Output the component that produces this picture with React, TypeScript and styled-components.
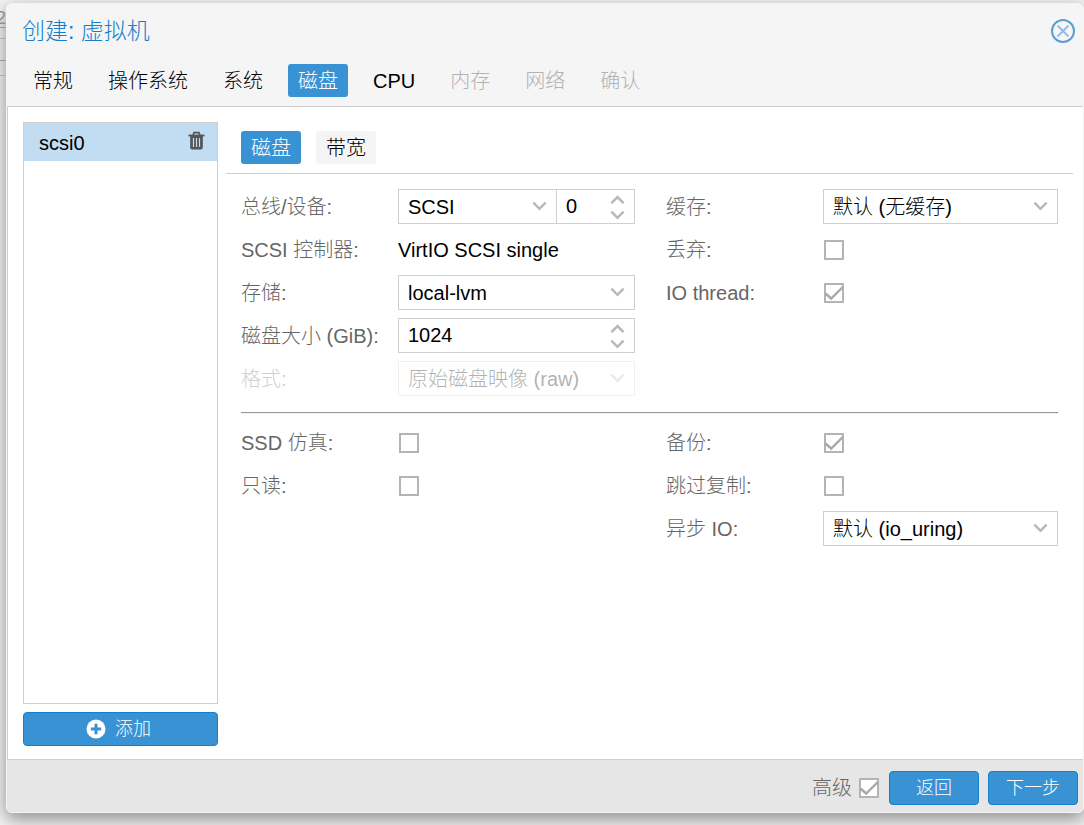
import React, { useState } from "react";
import styled, { createGlobalStyle, css } from "styled-components";

const GlobalStyle = createGlobalStyle`
  * { box-sizing: border-box; }
  html, body, #root { height: 100%; }
  body {
    margin: 0;
    background: #f6f6f6;
    color: #000;
    font-family: "Liberation Sans", "Noto Sans CJK SC", sans-serif;
    font-weight: 300;
    font-size: 20px;
    line-height: 24px;
  }
  button, input, select { font: inherit; color: inherit; margin: 0; }
`;

const Backdrop = styled.div`
  position: relative;
  min-height: 100%;
  display: flex;
  padding: 3px 0 12px 6px;
  overflow: hidden;
`;

const PageBehind = styled.div`
  position: absolute;
  inset: 0 auto auto 0;
  width: 6px;
  overflow: hidden;
  color: #8c8c8c;
  font-size: 18px;
  line-height: 18px;
`;

const BehindLine = styled.div<{ $height: number; $dark?: boolean }>`
  height: ${(p) => p.$height}px;
  display: flex;
  align-items: flex-end;
  justify-content: flex-end;
  border-bottom: 1px solid ${(p) => (p.$dark ? "#999" : "#c4c4c4")};
`;

const Dialog = styled.main`
  position: relative;
  flex: 1;
  min-width: 0;
  display: flex;
  flex-direction: column;
  background: #f5f5f5;
  border: 1px solid #f5f5f5;
  border-radius: 6px;
  box-shadow: 0 6px 18px 1px #919191;
`;

const Header = styled.header`
  display: flex;
  align-items: center;
  justify-content: space-between;
  padding: 12px 7px 0 15px;
`;

const Title = styled.h1`
  margin: 0;
  font-size: 23px;
  line-height: 30px;
  font-weight: 300;
  color: #157fcc;
`;

const CloseButton = styled.button`
  display: flex;
  padding: 0;
  border: 0;
  background: none;
`;

const TabBar = styled.nav<{ $inner?: boolean }>`
  display: flex;
  gap: 15px;
  ${(p) =>
    p.$inner
      ? css`
          padding: 9px 15px;
          border-bottom: 1px solid #cfcfcf;
        `
      : css`
          padding: 18px 16px 9px;
        `}
`;

const Tab = styled.button<{ $active?: boolean; $shaded?: boolean }>`
  height: 33px;
  padding: 1px 10px 0;
  border: 0;
  border-radius: 3px;
  white-space: nowrap;
  background: ${(p) => (p.$active ? "#3892d4" : p.$shaded ? "#f5f5f5" : "transparent")};
  color: ${(p) => (p.$active ? "#fff" : "#000")};
  &:disabled { color: #b2b2b2; }
`;

const Body = styled.section`
  flex: 1;
  display: flex;
  gap: 8px;
  padding: 15px 10px 13px 15px;
  background: #fff;
  border: 1px solid #cfcfcf;
  border-right: 0;
`;

const Sidebar = styled.aside`
  width: 195px;
  display: flex;
  flex-direction: column;
  gap: 8px;
`;

const DiskList = styled.ul`
  flex: 1;
  margin: 0;
  padding: 0;
  list-style: none;
  border: 1px solid #cfcfcf;
`;

const DiskItem = styled.li`
  height: 38px;
  display: flex;
  align-items: center;
  justify-content: space-between;
  padding: 1px 12px 0 15px;
  background: #c2ddf2;
`;

const IconButton = styled.button`
  display: flex;
  padding: 0 0 4px;
  border: 0;
  background: none;
`;

const ActionButton = styled.button<{ $wide?: boolean }>`
  width: ${(p) => (p.$wide ? "100%" : "90px")};
  height: 34px;
  display: flex;
  align-items: center;
  justify-content: center;
  gap: 9px;
  padding: ${(p) => (p.$wide ? "0 4px 0 0" : "0")};
  border: 1px solid #157fcc;
  border-radius: 4px;
  background: #3892d4;
  color: #fff;
  font-size: 18px;
`;

const Panel = styled.div`
  flex: 1;
  min-width: 0;
`;

const Form = styled.form`
  padding: 15px 15px 0;
`;

const Columns = styled.div`
  display: grid;
  grid-template-columns: 394fr 392fr;
  column-gap: 31px;
`;

const Column = styled.div`
  display: flex;
  flex-direction: column;
  gap: 8px;
`;

const Row = styled.div<{ $dim?: boolean }>`
  height: 35px;
  display: flex;
  align-items: center;
  opacity: ${(p) => (p.$dim ? 0.3 : 1)};
`;

const Label = styled.label`
  width: 157px;
  flex: none;
  color: #666;
  white-space: nowrap;
`;

const Controls = styled.div`
  flex: 1;
  min-width: 0;
  display: flex;
`;

const Divider = styled.hr`
  height: 2px;
  margin: 16px 0 11px;
  border: 0;
  border-top: 1px solid #999;
  border-bottom: 1px solid #eee;
`;

const Box = styled.div<{ $fixed?: boolean }>`
  position: relative;
  height: 35px;
  min-width: 0;
  ${(p) => (p.$fixed ? "width: 79px; flex: none; margin-left: -1px;" : "flex: 1;")}
`;

const fieldStyle = css`
  width: 100%;
  height: 35px;
  padding: 0 30px 0 9px;
  border: 1px solid #cfcfcf;
  border-radius: 0;
  background: #fff;
  appearance: none;
  outline: 0;
  opacity: 1;
  color: #000;
`;

const Select = styled.select`${fieldStyle}`;
const Input = styled.input`${fieldStyle}`;

const Trigger = styled.span`
  position: absolute;
  top: 12px;
  right: 10px;
  display: flex;
  pointer-events: none;
`;

const Spinner = styled.span`
  position: absolute;
  top: 6px;
  right: 10px;
  display: flex;
  flex-direction: column;
  gap: 5px;
`;

const SpinButton = styled.button`
  display: flex;
  padding: 0;
  border: 0;
  background: none;
`;

const CheckWrap = styled.span<{ $indent?: boolean }>`
  position: relative;
  display: flex;
  width: 20px;
  height: 20px;
  margin-left: ${(p) => (p.$indent ? 1 : 0)}px;
`;

const CheckInput = styled.input`
  width: 20px;
  height: 20px;
  appearance: none;
  border: 2px solid #b4b4b4;
  background: #fff;
`;

const CheckMark = styled.svg`
  position: absolute;
  inset: 0;
  pointer-events: none;
`;

const Footer = styled.footer`
  display: flex;
  align-items: center;
  justify-content: flex-end;
  gap: 9px;
  padding: 11px 5px 7px 0;
  height: 52px;
  background: #e6e6e6;
  border-radius: 0 0 5px 5px;
`;

const Advanced = styled.div`
  display: flex;
  align-items: center;
  gap: 7px;
  padding-right: 1px;
  color: #666;
`;

function Chevron({ up }: { up?: boolean }) {
  return (
    <svg width="15" height="10" viewBox="0 0 15 10" fill="none" stroke="#b8b8b8" strokeWidth="2.5">
      <path d={up ? "M1.4 8.2 7.5 2l6.1 6.2" : "M1.4 1.6l6.1 6.2 6.1-6.2"} />
    </svg>
  );
}

function Combo({ id, value, disabled }: { id: string; value: string; disabled?: boolean }) {
  return (
    <Box>
      <Select id={id} disabled={disabled} defaultValue={value}>
        <option>{value}</option>
      </Select>
      <Trigger><Chevron /></Trigger>
    </Box>
  );
}

function NumberField({ id, initial, fixed, label }: { id: string; initial: number; fixed?: boolean; label?: string }) {
  const [value, setValue] = useState(initial);
  return (
    <Box $fixed={fixed}>
      <Input
        id={id}
        inputMode="numeric"
        aria-label={label}
        value={value}
        onChange={(e) => setValue(Number(e.target.value) || 0)}
      />
      <Spinner>
        <SpinButton type="button" aria-label="增加" onClick={() => setValue(value + 1)}><Chevron up /></SpinButton>
        <SpinButton type="button" aria-label="减少" onClick={() => setValue(Math.max(0, value - 1))}><Chevron /></SpinButton>
      </Spinner>
    </Box>
  );
}

function Checkbox({ id, initial, indent = true }: { id: string; initial?: boolean; indent?: boolean }) {
  const [on, setOn] = useState(!!initial);
  return (
    <CheckWrap $indent={indent}>
      <CheckInput id={id} type="checkbox" checked={on} onChange={() => setOn(!on)} />
      {on && (
        <CheckMark width="20" height="20" viewBox="0 0 20 20" fill="none" stroke="#a8a8a8" strokeWidth="2.4">
          <path d="M1.5 10.5 7.2 15.5 18.8 4" />
        </CheckMark>
      )}
    </CheckWrap>
  );
}

function Field({ id, label, dim, children }: { id: string; label: string; dim?: boolean; children: React.ReactNode }) {
  return (
    <Row $dim={dim}>
      <Label htmlFor={id}>{label}</Label>
      <Controls>{children}</Controls>
    </Row>
  );
}

const steps = ["常规", "操作系统", "系统", "磁盘", "CPU", "内存", "网络", "确认"];

export default function App() {
  return (
    <>
      <GlobalStyle />
      <Backdrop>
        <PageBehind aria-hidden="true">
          <BehindLine $height={28} $dark>2</BehindLine>
          <BehindLine $height={11} />
          <BehindLine $height={22} $dark />
          <BehindLine $height={15} />
        </PageBehind>
        <Dialog>
          <Header>
            <Title>创建: 虚拟机</Title>
            <CloseButton type="button" aria-label="关闭">
              <svg width="26" height="26" viewBox="0 0 26 26" fill="none">
                <circle cx="13" cy="13" r="11" stroke="#5a9fd0" strokeWidth="2" />
                <path d="M7.5 7.5l11 11M18.5 7.5l-11 11" stroke="#8dbbe8" strokeWidth="1.8" />
              </svg>
            </CloseButton>
          </Header>
          <TabBar>
            {steps.map((s, i) => (
              <Tab key={s} type="button" $active={i === 3} disabled={i > 4}>{s}</Tab>
            ))}
          </TabBar>
          <Body>
            <Sidebar>
              <DiskList>
                <DiskItem>
                  <span>scsi0</span>
                  <IconButton type="button" aria-label="删除">
                    <svg width="17" height="20" viewBox="0 0 17 20" fill="none" stroke="#555">
                      <path d="M.5 4.5h16" strokeWidth="1.8" />
                      <path d="M5 4.2 6 1.6h5L12 4.2" strokeWidth="1.6" />
                      <path d="M2.2 5h12.6v11.5q0 2-1.8 2H4q-1.8 0-1.8-2z" fill="#555" stroke="none" />
                      <path d="M5.5 7v9M8.5 7v9M11.5 7v9" stroke="#c2ddf2" strokeWidth="1.2" />
                    </svg>
                  </IconButton>
                </DiskItem>
              </DiskList>
              <ActionButton type="button" $wide>
                <svg width="20" height="20" viewBox="0 0 20 20">
                  <circle cx="10" cy="10" r="9.5" fill="#fff" />
                  <path d="M10 4.8v10.4M4.8 10h10.4" stroke="#3892d4" strokeWidth="3" />
                </svg>
                添加
              </ActionButton>
            </Sidebar>
            <Panel>
              <TabBar $inner>
                <Tab type="button" $active>磁盘</Tab>
                <Tab type="button" $shaded>带宽</Tab>
              </TabBar>
              <Form>
                <Columns>
                  <Column>
                    <Field id="bus" label="总线/设备:">
                      <Combo id="bus" value="SCSI" />
                      <NumberField id="device" label="设备" initial={0} fixed />
                    </Field>
                    <Row>
                      <Label as="span">SCSI 控制器:</Label>
                      <span>VirtIO SCSI single</span>
                    </Row>
                    <Field id="storage" label="存储:"><Combo id="storage" value="local-lvm" /></Field>
                    <Field id="size" label="磁盘大小 (GiB):"><NumberField id="size" initial={1024} /></Field>
                    <Field id="format" label="格式:" dim><Combo id="format" value="原始磁盘映像 (raw)" disabled /></Field>
                  </Column>
                  <Column>
                    <Field id="cache" label="缓存:"><Combo id="cache" value="默认 (无缓存)" /></Field>
                    <Field id="discard" label="丢弃:"><Checkbox id="discard" /></Field>
                    <Field id="iothread" label="IO thread:"><Checkbox id="iothread" initial /></Field>
                  </Column>
                </Columns>
                <Divider />
                <Columns>
                  <Column>
                    <Field id="ssd" label="SSD 仿真:"><Checkbox id="ssd" /></Field>
                    <Field id="readonly" label="只读:"><Checkbox id="readonly" /></Field>
                  </Column>
                  <Column>
                    <Field id="backup" label="备份:"><Checkbox id="backup" initial /></Field>
                    <Field id="skip" label="跳过复制:"><Checkbox id="skip" /></Field>
                    <Field id="aio" label="异步 IO:"><Combo id="aio" value="默认 (io_uring)" /></Field>
                  </Column>
                </Columns>
              </Form>
            </Panel>
          </Body>
          <Footer>
            <Advanced>
              <label htmlFor="advanced">高级</label>
              <Checkbox id="advanced" initial indent={false} />
            </Advanced>
            <ActionButton type="button">返回</ActionButton>
            <ActionButton type="button">下一步</ActionButton>
          </Footer>
        </Dialog>
      </Backdrop>
    </>
  );
}
